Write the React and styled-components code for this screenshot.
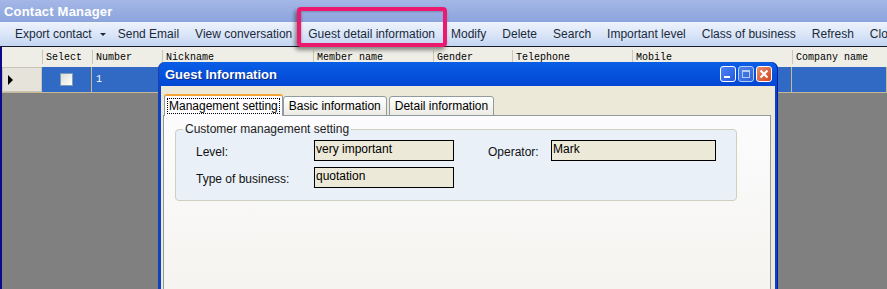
import React from 'react';
import styled, { createGlobalStyle } from 'styled-components';

const GlobalStyle = createGlobalStyle`
    html, body {
        margin: 0;
        padding: 0;
        background: #808080;
        overflow: hidden;
    }
`;

const Frame = styled.div`
    position: relative;
    width: 887px;
    height: 289px;
    overflow: hidden;
    display: flex;
    flex-direction: column;
    font-family: "Liberation Sans", Arial, sans-serif;
    font-size: 12px;
    background: #808080;
`;

const TitleBar = styled.div`
    height: 22px;
    flex: none;
    display: flex;
    align-items: center;
    padding-left: 4px;
    background: linear-gradient(#a4b7e6, #8ca4dd);
    color: #fff;
    font-weight: bold;
    font-size: 13px;
    letter-spacing: 0.2px;
`;

const Toolbar = styled.div`
    height: 24px;
    flex: none;
    display: flex;
    align-items: center;
    background: linear-gradient(#eef3fc 0%, #dbe6f8 50%, #c4d5f1 100%);
    border-bottom: 1px solid #1a1a2e;
    white-space: nowrap;
    color: #1b2a3a;
`;

const Grip = styled.div`
    width: 2px;
    height: 16px;
    margin: 0 5px 0 3px;
    background: repeating-linear-gradient(#27416b 0 2px, transparent 2px 4px);
`;

const ToolButton = styled.div`
    padding: 0 ${p => (p.dropdown ? 5 : 9)}px 0 7px;
    display: flex;
    align-items: center;
    gap: 8px;
`;

const Caret = styled.span`
    width: 0;
    height: 0;
    border-left: 3px solid transparent;
    border-right: 3px solid transparent;
    border-top: 3px solid #1b2a3a;
`;

const Sep = styled.div`
    width: 1px;
    height: 17px;
    background: #9db0d2;
    box-shadow: 1px 0 0 #fff;
`;

const Grid = styled.div`
    flex: 1;
    display: flex;
    flex-direction: column;
    border-left: 2px solid #0a0a8a;
`;

const HeaderRow = styled.div`
    height: 20px;
    display: flex;
    background: #efeee6;
    font-family: "Liberation Mono", "Courier New", monospace;
    font-size: 10px;
    color: #000;
`;

const HeaderCell = styled.div`
    width: ${p => p.w}px;
    flex: none;
    display: flex;
    align-items: center;
    padding-left: 4px;
    box-sizing: border-box;
    position: relative;
    &::before {
        content: '';
        position: absolute;
        left: 0;
        top: 3px;
        bottom: 3px;
        width: 1px;
        background: ${p => (p.first ? 'transparent' : '#c9c7ba')};
    }
`;

const DataRow = styled.div`
    height: 25px;
    display: flex;
    background: #316ac5;
    color: #fff;
    font-family: "Liberation Mono", "Courier New", monospace;
    font-size: 10px;
    border-bottom: 1px solid #c8b894;
`;

const RowHeader = styled.div`
    width: 40px;
    flex: none;
    box-sizing: border-box;
    background: #e6e4da;
    border: 1px solid #c8c6bb;
    display: flex;
    align-items: center;
    padding-left: 5px;
`;

const Pointer = styled.span`
    width: 0;
    height: 0;
    border-top: 5px solid transparent;
    border-bottom: 5px solid transparent;
    border-left: 5px solid #000;
`;

const DataCell = styled.div`
    width: ${p => p.w}px;
    flex: none;
    box-sizing: border-box;
    border-right: 1px solid #c8b894;
    display: flex;
    align-items: center;
    justify-content: ${p => (p.center ? 'center' : 'flex-start')};
    padding-left: ${p => (p.center ? 0 : 4)}px;
`;

const Check = styled.span`
    width: 11px;
    height: 11px;
    background: linear-gradient(135deg, #dcdcd6, #fff);
    border: 1px solid #7f9db9;
`;

const Empty = styled.div`
    flex: 1;
    background: #808080;
`;

const Highlight = styled.div`
    position: absolute;
    left: 297px;
    top: 7px;
    width: 150px;
    height: 40px;
    box-sizing: border-box;
    border: 4px solid #ec1a6e;
    border-radius: 4px;
    box-shadow: -2px 3px 4px rgba(0, 0, 0, 0.45), inset 1px 1px 2px rgba(0, 0, 0, 0.2);
`;

const Dialog = styled.div`
    position: absolute;
    left: 158px;
    top: 62px;
    width: 620px;
    height: 250px;
    box-sizing: border-box;
    display: flex;
    flex-direction: column;
    border-radius: 7px 7px 0 0;
    background: linear-gradient(#0a5ee6, #0347d4 24px, #0a3fd0 30px);
    padding: 0 3px 3px;
    box-shadow: inset 1px 0 0 #1d3fa8, inset -1px 0 0 #001ea0;
`;

const DialogTitle = styled.div`
    height: 24px;
    flex: none;
    display: flex;
    align-items: center;
    justify-content: space-between;
    padding: 0 3px 0 4px;
    color: #fff;
    font-weight: bold;
    font-size: 13px;
    text-shadow: 1px 1px 0 #0b2e8c;
`;

const TitleButtons = styled.div`
    display: flex;
    gap: 2px;
`;

const TitleButton = styled.div`
    width: 14px;
    height: 14px;
    border: 1px solid #fff;
    border-radius: 3px;
    background: ${p =>
        p.kind === 'close'
            ? 'linear-gradient(135deg, #e98d6c, #d4451e)'
            : p.kind === 'max'
            ? 'linear-gradient(135deg, #6e95ec, #3e6ee0)'
            : 'linear-gradient(135deg, #4d85f7, #2458df)'};
    opacity: ${p => (p.kind === 'max' ? 0.7 : 1)};
`;

const Body = styled.div`
    flex: 1;
    background: #ece9d8;
    padding: 8px 2px 0 2px;
    display: flex;
    flex-direction: column;
`;

const Tabs = styled.div`
    display: flex;
    align-items: flex-end;
    height: 22px;
    padding-left: 1px;
    position: relative;
    z-index: 1;
    margin-bottom: -1px;
`;

const Tab = styled.div`
    height: ${p => (p.active ? 22 : 20)}px;
    box-sizing: border-box;
    padding: 0 ${p => (p.active ? 3 : 5)}px;
    margin-right: ${p => (p.active ? 0 : 2)}px;
    display: flex;
    align-items: center;
    border: 1px solid #919b9c;
    border-bottom: ${p => (p.active ? 'none' : '1px solid #919b9c')};
    border-top: ${p => (p.active ? '2px solid #f2a536' : '1px solid #919b9c')};
    border-radius: 3px 3px 0 0;
    background: ${p => (p.active ? '#fcfcfe' : 'linear-gradient(#fff, #ecebe5)')};
    color: #000;
`;

const FocusText = styled.span`
    outline: 1px dotted #000;
    padding: 0 1px;
`;

const Panel = styled.div`
    flex: 1;
    border: 1px solid #919b9c;
    background: linear-gradient(#fcfcfe, #f4f3ee);
    margin-right: 2px;
    padding: 6px 34px 0 11px;
`;

const GroupBox = styled.fieldset`
    margin: 0;
    padding: 4px 20px 12px;
    border: 1px solid #d0d0bf;
    border-radius: 4px;
    background: #e9f0f8;
`;

const Legend = styled.legend`
    padding: 0 2px;
    margin-left: -13px;
    color: #1c1c1c;
`;

const FormGrid = styled.div`
    display: grid;
    grid-template-columns: 118px 140px 34px 63px 165px;
    grid-auto-rows: 21px;
    row-gap: 6px;
`;

const Label = styled.div`
    grid-column: ${p => p.col};
    padding-top: 5px;
    color: #111;
`;

const Field = styled.div`
    grid-column: ${p => p.col};
    box-sizing: border-box;
    border: 1px solid #000;
    background: #ece9d8;
    padding: 1px 1px;
    color: #000;
    line-height: 15px;
`;

const columns = [
    { name: 'Select', w: 50 },
    { name: 'Number', w: 70 },
    { name: 'Nickname', w: 151 },
    { name: 'Member name', w: 120 },
    { name: 'Gender', w: 79 },
    { name: 'Telephone', w: 120 },
    { name: 'Mobile', w: 160 },
    { name: 'Company name', w: 95 }
];

const tools = ['Send Email', 'View conversation', 'Guest detail information', 'Modify', 'Delete', 'Search', 'Important level', 'Class of business'];

const App = () => {
    return (
        <Frame>
            <GlobalStyle />
            <TitleBar>Contact Manager</TitleBar>
            <Toolbar>
                <Grip />
                <ToolButton dropdown>
                    Export contact <Caret />
                </ToolButton>
                {tools.map(t => (
                    <React.Fragment key={t}>
                        <Sep />
                        <ToolButton>{t}</ToolButton>
                    </React.Fragment>
                ))}
                <Sep />
                <ToolButton>Refresh</ToolButton>
                <ToolButton>Close</ToolButton>
            </Toolbar>
            <Grid>
                <HeaderRow>
                    <HeaderCell w={40} first />
                    {columns.map(c => (
                        <HeaderCell key={c.name} w={c.w}>{c.name}</HeaderCell>
                    ))}
                </HeaderRow>
                <DataRow>
                    <RowHeader><Pointer /></RowHeader>
                    <DataCell w={50} center><Check /></DataCell>
                    <DataCell w={70}>1</DataCell>
                    {columns.slice(2).map(c => (
                        <DataCell key={c.name} w={c.w} />
                    ))}
                </DataRow>
                <Empty />
            </Grid>

            <Highlight />

            <Dialog>
                <DialogTitle>
                    Guest Information
                    <TitleButtons>
                        <TitleButton kind="min">
                            <svg width="14" height="14" viewBox="0 0 14 14">
                                <rect x="3" y="9" width="6" height="2" fill="#fff" />
                            </svg>
                        </TitleButton>
                        <TitleButton kind="max">
                            <svg width="14" height="14" viewBox="0 0 14 14">
                                <rect x="3.5" y="3.5" width="7" height="7" fill="none" stroke="#fff" strokeWidth="1" />
                                <rect x="3" y="3" width="8" height="2" fill="#fff" />
                            </svg>
                        </TitleButton>
                        <TitleButton kind="close">
                            <svg width="14" height="14" viewBox="0 0 14 14">
                                <path d="M3.5 3.5 L10.5 10.5 M10.5 3.5 L3.5 10.5" stroke="#fff" strokeWidth="2" />
                            </svg>
                        </TitleButton>
                    </TitleButtons>
                </DialogTitle>
                <Body>
                    <Tabs>
                        <Tab active><FocusText>Management setting</FocusText></Tab>
                        <Tab>Basic information</Tab>
                        <Tab>Detail information</Tab>
                    </Tabs>
                    <Panel>
                        <GroupBox>
                            <Legend>Customer management setting</Legend>
                            <FormGrid>
                                <Label col={1}>Level:</Label>
                                <Field col={2}>very important</Field>
                                <Label col={4}>Operator:</Label>
                                <Field col={5}>Mark</Field>
                                <Label col={1}>Type of business:</Label>
                                <Field col={2}>quotation</Field>
                            </FormGrid>
                        </GroupBox>
                    </Panel>
                </Body>
            </Dialog>
        </Frame>
    );
};

export default App;
